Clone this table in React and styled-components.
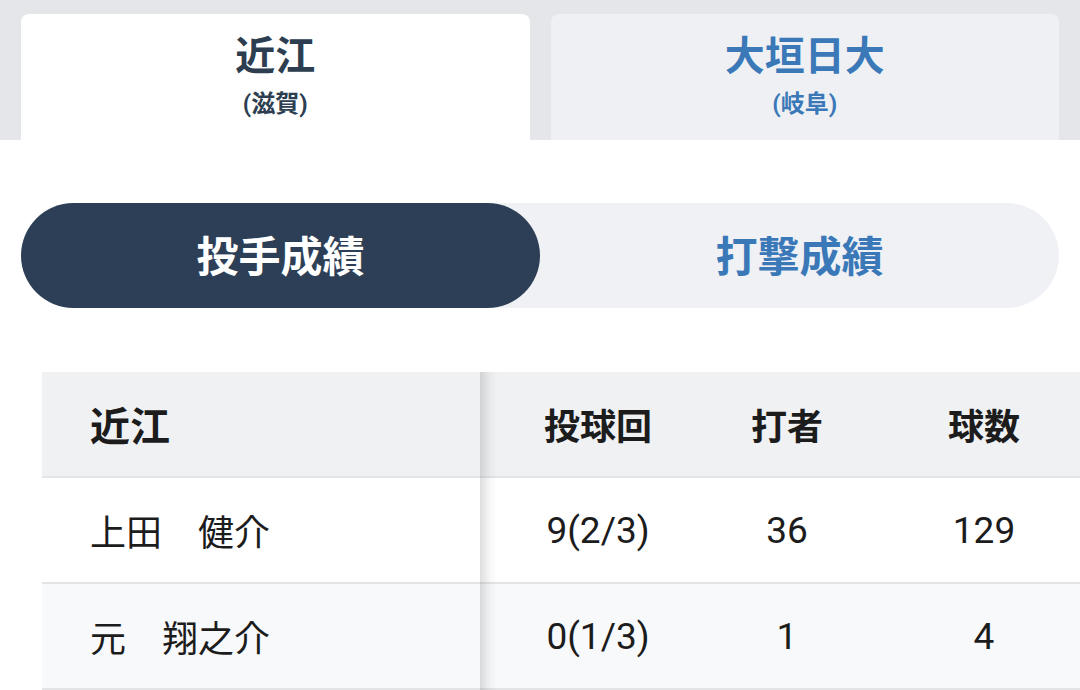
import React from 'react'
import styled, { createGlobalStyle, css } from 'styled-components'

const GlobalStyle = createGlobalStyle`
  html, body {
    margin: 0;
    padding: 0;
    background: #ffffff;
    overflow: hidden;
  }
  body {
    font-family: Roboto, "Noto Sans CJK JP", "Noto Sans", sans-serif;
    color: #1c1c1c;
  }
`

const teams = [
  { name: '近江', pref: '滋賀' },
  { name: '大垣日大', pref: '岐阜' }
]

const pitchers = [
  { name: '上田　健介', innings: '9(2/3)', batters: '36', pitches: '129' },
  { name: '元　翔之介', innings: '0(1/3)', batters: '1', pitches: '4' }
]

const Page = styled.div`
  width: 1080px;
  height: 690px;
  overflow: hidden;
`

const TeamTabs = styled.div`
  display: grid;
  grid-template-columns: 1fr 1fr;
  gap: 21px;
  height: 140px;
  box-sizing: border-box;
  padding: 14px 21px 0;
  background: #e4e6e9;
`

const TeamTab = styled.div`
  display: flex;
  flex-direction: column;
  align-items: center;
  padding-top: 18px;
  border-radius: 8px 8px 0 0;
  background: ${p => (p.$active ? '#ffffff' : '#eef0f3')};
  color: ${p => (p.$active ? '#2c3e50' : '#3a78b8')};
`

const TeamName = styled.div`
  font-size: 40px;
  line-height: 50px;
  font-weight: 700;
`

const TeamPref = styled.div`
  margin-top: 7px;
  font-size: 24px;
  line-height: 30px;
  font-weight: 700;
`

const Toggle = styled.div`
  display: grid;
  grid-template-columns: 1fr 1fr;
  height: 105px;
  margin: 63px 21px 0;
  border-radius: 53px;
  background: #eff1f4;
`

const Segment = styled.div`
  display: flex;
  align-items: center;
  justify-content: center;
  padding-bottom: 5px;
  border-radius: 53px;
  font-size: 42px;
  font-weight: 700;
  color: #3a78b8;
  ${p => p.$active && css`
    background: #2c3f56;
    color: #ffffff;
  `}
`

const Table = styled.div`
  width: 1068px;
  margin: 64px 0 0 42px;
`

const Row = styled.div`
  display: grid;
  grid-template-columns: 438px 236px 142px 252px;
  height: 104px;
  border-bottom: 2px solid #e3e4e6;
  background: ${p => p.$bg};
`

const Cell = styled.div`
  display: flex;
  align-items: center;
  justify-content: center;
  font-size: ${p => (p.$head ? '36px' : '37px')};
  font-weight: ${p => (p.$head ? 700 : 400)};
  white-space: pre;
`

const NameCell = styled(Cell)`
  position: relative;
  justify-content: flex-start;
  padding-left: 48px;
  font-size: ${p => (p.$head ? '40px' : '36px')};

  &::after {
    content: '';
    position: absolute;
    top: 0;
    bottom: -2px;
    left: 100%;
    width: 18px;
    background: linear-gradient(to right, rgba(0, 0, 0, 0.13), rgba(0, 0, 0, 0.03) 55%, rgba(0, 0, 0, 0));
  }
`

export default function App () {
  return (
    <Page>
      <GlobalStyle />
      <TeamTabs>
        {teams.map((t, i) => (
          <TeamTab key={t.name} $active={i === 0}>
            <TeamName>{t.name}</TeamName>
            <TeamPref>({t.pref})</TeamPref>
          </TeamTab>
        ))}
      </TeamTabs>

      <Toggle>
        <Segment $active>投手成績</Segment>
        <Segment>打撃成績</Segment>
      </Toggle>

      <Table>
        <Row $bg='#f0f1f3'>
          <NameCell $head>近江</NameCell>
          <Cell $head>投球回</Cell>
          <Cell $head>打者</Cell>
          <Cell $head>球数</Cell>
        </Row>
        {pitchers.map((p, i) => (
          <Row key={p.name} $bg={i % 2 ? '#f8f9fa' : '#ffffff'}>
            <NameCell>{p.name}</NameCell>
            <Cell>{p.innings}</Cell>
            <Cell>{p.batters}</Cell>
            <Cell>{p.pitches}</Cell>
          </Row>
        ))}
      </Table>
    </Page>
  )
}
